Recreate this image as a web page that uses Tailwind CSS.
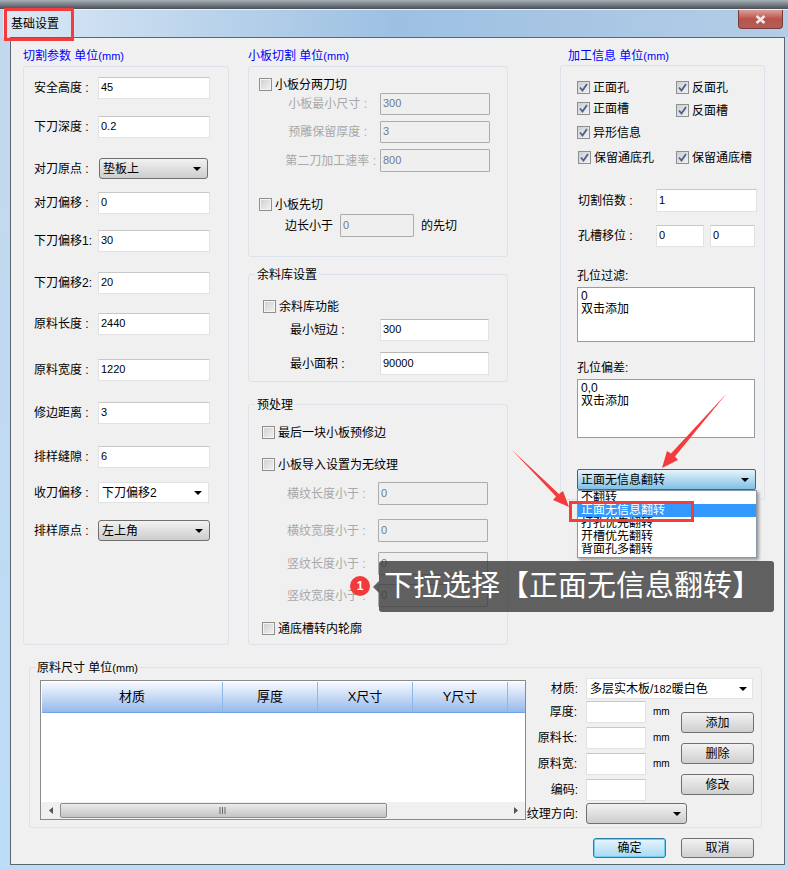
<!DOCTYPE html>
<html lang="zh-CN">
<head>
  <meta charset="UTF-8">
  <title>基础设置</title>
  <script src="https://cdn.jsdelivr.net/npm/@tailwindcss/browser@4"></script>
</head>
<body class="bg-[#b8c4d0]">
<div class="relative w-[788px] h-[870px] overflow-hidden text-[12px] leading-[14px] text-black [font-family:'Liberation_Sans','Noto_Sans_CJK_SC',sans-serif] bg-gradient-to-b from-[#c4d8ec] to-[#bcdcf8]">

  <!-- top strip behind the window -->
  <div class="h-[9px] bg-gradient-to-b from-[#a8b0b8] to-[#4a5058]"></div>

  <!-- title bar -->
  <div class="relative h-[28px] ml-[3px] bg-gradient-to-r from-[#dbe9f5] via-[#9dc0e2] to-[#b4cde6] border-t border-[#e8f2fa]">
    <span class="absolute left-[8px] top-[7px]">基础设置</span>
    <div class="absolute right-[5px] top-0 w-[45px] h-[19px] flex items-center justify-center rounded-b-[4px] border border-t-0 border-[#7a3a38] bg-gradient-to-b from-[#d9a09a] via-[#b9524a] to-[#b0605a]">
      <svg width="11" height="9" viewBox="0 0 11 9"><path d="M1.5 1 L9.5 8 M9.5 1 L1.5 8" stroke="#f0e8e8" stroke-width="2.6" fill="none"/></svg>
    </div>
  </div>

  <!-- window body -->
  <div class="ml-[10px] mr-[3px] h-[828px] bg-[#f0f0f0] border border-[#5c6670] pt-[11px] box-border">
    <div class="flex">

      <!-- left column -->
      <div class="ml-[12px] w-[206px]">
        <div class="h-[17px] text-[#0000ff]">切割参数 单位<span class="text-[11px]">(mm)</span></div>
        <div class="h-[579px] pl-[10px] pt-[10px] border border-[#dbe2ea] rounded-[3px] box-border">
          <div class="flex items-center h-[22px]"><span class="w-[64px]">安全高度 :</span><input value="45" class="w-[112px] h-[22px] pl-[2px] pb-[2px] text-[11px] bg-white border border-[#e2e2e2] border-t-[#c8c8c8]"></div>
          <div class="flex items-center h-[22px] mt-[17px]"><span class="w-[64px]">下刀深度 :</span><input value="0.2" class="w-[112px] h-[22px] pl-[2px] pb-[2px] text-[11px] bg-white border border-[#e2e2e2] border-t-[#c8c8c8]"></div>
          <div class="flex items-center h-[21px] mt-[20px]"><span class="w-[65px]">对刀原点 :</span><div class="flex items-center justify-between w-[109px] h-[21px] pl-[3px] pr-[6px] border border-[#707070] rounded-[3px] bg-gradient-to-b from-[#f2f2f2] to-[#cdcdcd]">垫板上<svg width="8" height="4" viewBox="0 0 8 4"><path d="M0 0H8L4 4Z" fill="#000"/></svg></div></div>
          <div class="flex items-center h-[22px] mt-[13px]"><span class="w-[64px]">对刀偏移 :</span><input value="0" class="w-[112px] h-[22px] pl-[2px] pb-[2px] text-[11px] bg-white border border-[#e2e2e2] border-t-[#c8c8c8]"></div>
          <div class="flex items-center h-[22px] mt-[16px]"><span class="w-[64px]">下刀偏移1:</span><input value="30" class="w-[112px] h-[22px] pl-[2px] pb-[2px] text-[11px] bg-white border border-[#e2e2e2] border-t-[#c8c8c8]"></div>
          <div class="flex items-center h-[22px] mt-[20px]"><span class="w-[64px]">下刀偏移2:</span><input value="20" class="w-[112px] h-[22px] pl-[2px] pb-[2px] text-[11px] bg-white border border-[#e2e2e2] border-t-[#c8c8c8]"></div>
          <div class="flex items-center h-[22px] mt-[19px]"><span class="w-[64px]">原料长度 :</span><input value="2440" class="w-[112px] h-[22px] pl-[2px] pb-[2px] text-[11px] bg-white border border-[#e2e2e2] border-t-[#c8c8c8]"></div>
          <div class="flex items-center h-[22px] mt-[24px]"><span class="w-[64px]">原料宽度 :</span><input value="1220" class="w-[112px] h-[22px] pl-[2px] pb-[2px] text-[11px] bg-white border border-[#e2e2e2] border-t-[#c8c8c8]"></div>
          <div class="flex items-center h-[22px] mt-[21px]"><span class="w-[64px]">修边距离 :</span><input value="3" class="w-[112px] h-[22px] pl-[2px] pb-[2px] text-[11px] bg-white border border-[#e2e2e2] border-t-[#c8c8c8]"></div>
          <div class="flex items-center h-[22px] mt-[22px]"><span class="w-[64px]">排样缝隙 :</span><input value="6" class="w-[112px] h-[22px] pl-[2px] pb-[2px] text-[11px] bg-white border border-[#e2e2e2] border-t-[#c8c8c8]"></div>
          <div class="flex items-center h-[21px] mt-[14px]"><span class="w-[64px]">收刀偏移 :</span><div class="flex items-center justify-between w-[111px] h-[21px] pl-[3px] pr-[6px] bg-white border border-[#e2e2e2]">下刀偏移2<svg width="8" height="4" viewBox="0 0 8 4"><path d="M0 0H8L4 4Z" fill="#000"/></svg></div></div>
          <div class="flex items-center h-[21px] mt-[17px]"><span class="w-[64px]">排样原点 :</span><div class="flex items-center justify-between w-[112px] h-[21px] pl-[3px] pr-[6px] border border-[#707070] rounded-[3px] bg-gradient-to-b from-[#f2f2f2] to-[#cdcdcd]">左上角<svg width="8" height="4" viewBox="0 0 8 4"><path d="M0 0H8L4 4Z" fill="#000"/></svg></div></div>
        </div>
      </div>

      <!-- middle column -->
      <div class="ml-[19px] w-[260px]">
        <div class="h-[17px] text-[#0000ff]">小板切割 单位<span class="text-[11px]">(mm)</span></div>

        <div class="h-[191px] pl-[10px] pt-[11px] border border-[#dbe2ea] rounded-[3px] box-border">
          <div class="flex items-center h-[13px] gap-[3px]"><div class="w-[13px] h-[13px] border border-[#8e8f8f] bg-gradient-to-br from-[#cfcfcf] to-[#f2f2f2] shadow-[inset_0_0_0_1px_#f4f4f4]"></div>小板分两刀切</div>
          <div class="flex items-center h-[22px] mt-[2px]"><span class="w-[121px] pr-[13px] text-right text-[#a8a8a8] whitespace-nowrap">小板最小尺寸 :</span><input disabled value="300" class="w-[110px] h-[22px] pl-[2px] pb-[2px] text-[11px] text-[#6d7c8c] bg-[#efefef] border border-[#acacac] rounded-[1px]"></div>
          <div class="flex items-center h-[22px] mt-[6px]"><span class="w-[121px] pr-[13px] text-right text-[#a8a8a8] whitespace-nowrap">预雕保留厚度 :</span><input disabled value="3" class="w-[110px] h-[22px] pl-[2px] pb-[2px] text-[11px] text-[#6d7c8c] bg-[#efefef] border border-[#acacac] rounded-[1px]"></div>
          <div class="flex items-center h-[23px] mt-[6px]"><span class="w-[121px] pr-[4px] text-right text-[#a8a8a8] whitespace-nowrap">第二刀加工速率 :</span><input disabled value="800" class="w-[110px] h-[23px] pl-[2px] pb-[2px] text-[11px] text-[#6d7c8c] bg-[#efefef] border border-[#acacac] rounded-[1px]"></div>
          <div class="flex items-center h-[13px] gap-[3px] mt-[26px]"><div class="w-[13px] h-[13px] border border-[#8e8f8f] bg-gradient-to-br from-[#cfcfcf] to-[#f2f2f2] shadow-[inset_0_0_0_1px_#f4f4f4]"></div>小板先切</div>
          <div class="flex items-center h-[23px] mt-[3px]"><span class="ml-[26px] w-[55px]">边长小于</span><input disabled value="0" class="w-[74px] h-[23px] pl-[2px] pb-[2px] text-[11px] text-[#6d7c8c] bg-[#efefef] border border-[#acacac] rounded-[1px]"><span class="ml-[7px]">的先切</span></div>
        </div>

        <div class="relative h-[108px] mt-[17px] pl-[14px] pt-[25px] border border-[#dbe2ea] rounded-[3px] box-border">
          <span class="absolute left-[6px] top-[-7px] px-[2px] bg-[#f0f0f0]">余料库设置</span>
          <div class="flex items-center h-[13px] gap-[3px]"><div class="w-[13px] h-[13px] border border-[#8e8f8f] bg-gradient-to-br from-[#cfcfcf] to-[#f2f2f2] shadow-[inset_0_0_0_1px_#f4f4f4]"></div>余料库功能</div>
          <div class="flex items-center h-[22px] mt-[6px]"><span class="ml-[27px] w-[90px]">最小短边 :</span><input value="300" class="w-[109px] h-[22px] pl-[2px] pb-[2px] text-[11px] bg-white border border-[#e2e2e2] border-t-[#b8b8b8]"></div>
          <div class="flex items-center h-[23px] mt-[11px]"><span class="ml-[27px] w-[90px]">最小面积 :</span><input value="90000" class="w-[109px] h-[23px] pl-[2px] pb-[2px] text-[11px] bg-white border border-[#e2e2e2] border-t-[#b8b8b8]"></div>
        </div>

        <div class="relative h-[241px] mt-[22px] pl-[13px] pt-[21px] border border-[#dbe2ea] rounded-[3px] box-border">
          <span class="absolute left-[6px] top-[-7px] px-[2px] bg-[#f0f0f0]">预处理</span>
          <div class="flex items-center h-[13px] gap-[3px]"><div class="w-[13px] h-[13px] border border-[#8e8f8f] bg-gradient-to-br from-[#cfcfcf] to-[#f2f2f2] shadow-[inset_0_0_0_1px_#f4f4f4]"></div>最后一块小板预修边</div>
          <div class="flex items-center h-[13px] gap-[3px] mt-[19px]"><div class="w-[13px] h-[13px] border border-[#8e8f8f] bg-gradient-to-br from-[#cfcfcf] to-[#f2f2f2] shadow-[inset_0_0_0_1px_#f4f4f4]"></div>小板导入设置为无纹理</div>
          <div class="flex items-center h-[23px] mt-[11px]"><span class="ml-[25px] w-[91px] text-[#a8a8a8] whitespace-nowrap">横纹长度小于 :</span><input disabled value="0" class="w-[110px] h-[23px] pl-[2px] pb-[2px] text-[11px] text-[#6d7c8c] bg-[#efefef] border border-[#acacac] rounded-[1px]"></div>
          <div class="flex items-center h-[23px] mt-[14px]"><span class="ml-[25px] w-[91px] text-[#a8a8a8] whitespace-nowrap">横纹宽度小于 :</span><input disabled value="0" class="w-[110px] h-[23px] pl-[2px] pb-[2px] text-[11px] text-[#6d7c8c] bg-[#efefef] border border-[#acacac] rounded-[1px]"></div>
          <div class="flex items-center h-[23px] mt-[10px]"><span class="ml-[25px] w-[91px] text-[#a8a8a8] whitespace-nowrap">竖纹长度小于 :</span><input disabled value="0" class="w-[110px] h-[23px] pl-[2px] pb-[2px] text-[11px] text-[#6d7c8c] bg-[#efefef] border border-[#acacac] rounded-[1px]"></div>
          <div class="flex items-center h-[23px] mt-[9px]"><span class="ml-[25px] w-[91px] text-[#a8a8a8] whitespace-nowrap">竖纹宽度小于 :</span><input disabled value="0" class="w-[110px] h-[23px] pl-[2px] pb-[2px] text-[11px] text-[#6d7c8c] bg-[#efefef] border border-[#acacac] rounded-[1px]"></div>
          <div class="flex items-center h-[13px] gap-[3px] mt-[15px]"><div class="w-[13px] h-[13px] border border-[#8e8f8f] bg-gradient-to-br from-[#cfcfcf] to-[#f2f2f2] shadow-[inset_0_0_0_1px_#f4f4f4]"></div>通底槽转内轮廓</div>
        </div>
      </div>

      <!-- right column -->
      <div class="ml-[52px] w-[205px]">
        <div class="h-[16px] ml-[8px] text-[#0000ff]">加工信息 单位<span class="text-[11px]">(mm)</span></div>
        <div class="relative h-[435px] pl-[16px] pt-[15px] border border-[#dbe2ea] rounded-[3px] box-border">
          <div class="flex h-[13px]">
            <div class="flex items-center w-[99px] gap-[3px]"><div class="flex items-center justify-center w-[13px] h-[13px] border border-[#8e8f8f] bg-gradient-to-br from-[#cfcfcf] to-[#f2f2f2]"><svg width="9" height="9" viewBox="0 0 9 9"><path d="M1 4.5 L3.5 7.5 L8 1" stroke="#4a5f94" stroke-width="1.8" fill="none"/></svg></div>正面孔</div>
            <div class="flex items-center gap-[3px]"><div class="flex items-center justify-center w-[13px] h-[13px] border border-[#8e8f8f] bg-gradient-to-br from-[#cfcfcf] to-[#f2f2f2]"><svg width="9" height="9" viewBox="0 0 9 9"><path d="M1 4.5 L3.5 7.5 L8 1" stroke="#4a5f94" stroke-width="1.8" fill="none"/></svg></div>反面孔</div>
          </div>
          <div class="flex items-start h-[15px] mt-[8px]">
            <div class="flex items-center w-[99px] h-[13px] gap-[3px]"><div class="flex items-center justify-center w-[13px] h-[13px] border border-[#8e8f8f] bg-gradient-to-br from-[#cfcfcf] to-[#f2f2f2]"><svg width="9" height="9" viewBox="0 0 9 9"><path d="M1 4.5 L3.5 7.5 L8 1" stroke="#4a5f94" stroke-width="1.8" fill="none"/></svg></div>正面槽</div>
            <div class="flex items-center h-[13px] mt-[2px] gap-[3px]"><div class="flex items-center justify-center w-[13px] h-[13px] border border-[#8e8f8f] bg-gradient-to-br from-[#cfcfcf] to-[#f2f2f2]"><svg width="9" height="9" viewBox="0 0 9 9"><path d="M1 4.5 L3.5 7.5 L8 1" stroke="#4a5f94" stroke-width="1.8" fill="none"/></svg></div>反面槽</div>
          </div>
          <div class="flex items-center h-[13px] mt-[9px] gap-[3px]"><div class="flex items-center justify-center w-[13px] h-[13px] border border-[#8e8f8f] bg-gradient-to-br from-[#cfcfcf] to-[#f2f2f2]"><svg width="9" height="9" viewBox="0 0 9 9"><path d="M1 4.5 L3.5 7.5 L8 1" stroke="#4a5f94" stroke-width="1.8" fill="none"/></svg></div>异形信息</div>
          <div class="flex h-[13px] mt-[12px]">
            <div class="flex items-center w-[98px] ml-[1px] gap-[3px]"><div class="flex items-center justify-center w-[13px] h-[13px] border border-[#8e8f8f] bg-gradient-to-br from-[#cfcfcf] to-[#f2f2f2]"><svg width="9" height="9" viewBox="0 0 9 9"><path d="M1 4.5 L3.5 7.5 L8 1" stroke="#4a5f94" stroke-width="1.8" fill="none"/></svg></div>保留通底孔</div>
            <div class="flex items-center gap-[3px]"><div class="flex items-center justify-center w-[13px] h-[13px] border border-[#8e8f8f] bg-gradient-to-br from-[#cfcfcf] to-[#f2f2f2]"><svg width="9" height="9" viewBox="0 0 9 9"><path d="M1 4.5 L3.5 7.5 L8 1" stroke="#4a5f94" stroke-width="1.8" fill="none"/></svg></div>保留通底槽</div>
          </div>
          <div class="flex items-center h-[23px] mt-[25px]"><span class="w-[78px] ml-[1px]">切割倍数 :</span><input value="1" class="w-[101px] h-[23px] pl-[2px] pb-[2px] text-[11px] bg-white border border-[#e2e2e2] border-t-[#c8c8c8]"></div>
          <div class="flex items-center h-[22px] mt-[13px]"><span class="w-[78px] ml-[1px]">孔槽移位 :</span><input value="0" class="w-[48px] h-[22px] pl-[2px] pb-[2px] text-[11px] bg-white border border-[#e2e2e2] border-t-[#c8c8c8]"><input value="0" class="w-[45px] ml-[6px] h-[22px] pl-[2px] pb-[2px] text-[11px] bg-white border border-[#e2e2e2] border-t-[#c8c8c8]"></div>
          <div class="h-[14px] mt-[22px]">孔位过滤:</div>
          <textarea class="block w-[178px] h-[55px] mt-[4px] pl-[3px] pt-[2px] leading-[13px] resize-none bg-white border border-[#9a9aa4]">0
双击添加</textarea>
          <div class="h-[14px] mt-[19px]">孔位偏差:</div>
          <textarea class="block w-[178px] h-[59px] mt-[4px] pl-[3px] pt-[2px] leading-[13px] resize-none bg-white border border-[#9a9aa4]">0,0
双击添加</textarea>
          <div class="flex items-center justify-between w-[179px] h-[21px] mt-[31px] pl-[3px] pr-[6px] border border-[#2b6a94] rounded-[2px] bg-gradient-to-b from-[#e6f4fc] to-[#7fc0e4]">正面无信息翻转<svg width="8" height="4" viewBox="0 0 8 4"><path d="M0 0H8L4 4Z" fill="#000"/></svg></div>
          <!-- open dropdown list -->
          <div class="absolute left-[16px] top-[424px] w-[180px] h-[68px] bg-white border border-[#8a97a8] shadow-[2px_2px_3px_#999] leading-[13px]">
            <div class="h-[13px] pl-[3px] overflow-hidden">不翻转</div>
            <div class="h-[13px] pl-[3px] overflow-hidden bg-[#3399ff] text-white">正面无信息翻转</div>
            <div class="h-[13px] pl-[3px] overflow-hidden">打孔优先翻转</div>
            <div class="h-[13px] pl-[3px] overflow-hidden">开槽优先翻转</div>
            <div class="h-[13px] pl-[3px] overflow-hidden">背面孔多翻转</div>
          </div>
        </div>
      </div>
    </div>

    <!-- material size group -->
    <div class="relative ml-[18px] mt-[22px] w-[733px] h-[161px] border border-[#dbe2ea] rounded-[3px] box-border">
      <span class="absolute left-[6px] top-[-7px] px-[1px] bg-[#f0f0f0]">原料尺寸 单位<span class="text-[11px]">(mm)</span></span>
      <div class="flex">
        <!-- table -->
        <div class="w-[486px] h-[140px] ml-[10px] mt-[12px] border border-[#8a8a8a] bg-white flex flex-col box-border">
          <div class="flex h-[31px] ml-[1px] mt-[1px] border-b border-[#6ea3e4] bg-gradient-to-b from-[#f8fafe] to-[#96b9ea] text-[13px] text-center leading-[30px]">
            <div class="w-[181px] border-r border-[#8db8ec]">材质</div>
            <div class="w-[95px] border-r border-[#8db8ec]">厚度</div>
            <div class="w-[95px] border-r border-[#8db8ec]">X尺寸</div>
            <div class="w-[95px] border-r border-[#8db8ec]">Y尺寸</div>
            <div class="flex-1"></div>
          </div>
          <div class="flex-1"></div>
          <div class="flex items-center h-[17px] bg-[#f0f0f0]">
            <div class="w-[19px] flex justify-center"><svg width="4" height="7" viewBox="0 0 4 7"><path d="M4 0V7L0 3.5Z" fill="#555"/></svg></div>
            <div class="relative w-[327px] h-[15px] border border-[#8e8e8e] rounded-[2px] bg-gradient-to-b from-[#ececec] to-[#c4c4c4]">
              <svg class="absolute left-[158px] top-[3px]" width="8" height="7" viewBox="0 0 8 7"><path d="M1 0V7M3.5 0V7M6 0V7" stroke="#666"/></svg>
            </div>
            <div class="flex-1"></div>
            <div class="w-[19px] flex justify-center"><svg width="4" height="7" viewBox="0 0 4 7"><path d="M0 0V7L4 3.5Z" fill="#555"/></svg></div>
          </div>
        </div>

        <!-- material form -->
        <div class="w-[156px] mt-[10px]">
          <div class="flex items-center h-[21px]"><span class="w-[60px] shrink-0 pr-[8px] text-right">材质:</span><div class="flex items-center justify-between w-[167px] shrink-0 h-[21px] pl-[3px] pr-[5px] bg-white border border-[#e2e2e2]"><span class="whitespace-nowrap">多层实木板/<span class="text-[11px]">182</span>暖白色</span><svg width="8" height="4" viewBox="0 0 8 4"><path d="M0 0H8L4 4Z" fill="#000"/></svg></div></div>
          <div class="flex items-center h-[22px] mt-[2px]"><span class="w-[60px] shrink-0 pr-[9px] text-right">厚度:</span><input class="w-[60px] h-[22px] bg-white border border-[#e2e2e2] border-t-[#c8c8c8]"><span class="ml-[7px] text-[10px]">mm</span></div>
          <div class="flex items-center h-[22px] mt-[4px]"><span class="w-[60px] shrink-0 pr-[9px] text-right">原料长:</span><input class="w-[60px] h-[22px] bg-white border border-[#e2e2e2] border-t-[#c8c8c8]"><span class="ml-[7px] text-[10px]">mm</span></div>
          <div class="flex items-center h-[22px] mt-[4px]"><span class="w-[60px] shrink-0 pr-[9px] text-right">原料宽:</span><input class="w-[60px] h-[22px] bg-white border border-[#e2e2e2] border-t-[#c8c8c8]"><span class="ml-[7px] text-[10px]">mm</span></div>
          <div class="flex items-center h-[22px] mt-[4px]"><span class="w-[60px] shrink-0 pr-[8px] text-right">编码:</span><input class="w-[60px] h-[22px] bg-white border border-[#e2e2e2] border-t-[#c8c8c8]"></div>
          <div class="flex items-center h-[21px] mt-[2px]"><span class="w-[60px] shrink-0 pr-[8px] text-right whitespace-nowrap">纹理方向:</span><div class="flex items-center justify-end w-[101px] shrink-0 h-[21px] pr-[5px] border border-[#707070] rounded-[3px] bg-gradient-to-b from-[#f2f2f2] to-[#cdcdcd]"><svg width="8" height="4" viewBox="0 0 8 4"><path d="M0 0H8L4 4Z" fill="#000"/></svg></div></div>
        </div>

        <!-- action buttons -->
        <div class="ml-[-1px] mt-[44px] flex flex-col gap-[10px]">
          <div class="w-[73px] h-[21px] flex items-center justify-center border border-[#707070] rounded-[3px] bg-gradient-to-b from-[#f2f2f2] to-[#cfcfcf]">添加</div>
          <div class="w-[73px] h-[21px] flex items-center justify-center border border-[#707070] rounded-[3px] bg-gradient-to-b from-[#f2f2f2] to-[#cfcfcf]">删除</div>
          <div class="w-[73px] h-[21px] flex items-center justify-center border border-[#707070] rounded-[3px] bg-gradient-to-b from-[#f2f2f2] to-[#cfcfcf]">修改</div>
        </div>
      </div>
    </div>

    <!-- dialog buttons -->
    <div class="flex ml-[582px] mt-[10px] gap-[15px]">
      <div class="w-[73px] h-[20px] flex items-center justify-center border border-[#2b7ea8] rounded-[3px] shadow-[inset_0_0_0_1px_#6fd0f4] bg-gradient-to-b from-[#e8f6fd] to-[#a8d8f2]">确定</div>
      <div class="w-[73px] h-[20px] flex items-center justify-center border border-[#707070] rounded-[3px] bg-gradient-to-b from-[#f2f2f2] to-[#cfcfcf]">取消</div>
    </div>
  </div>

  <!-- annotations drawn over the screenshot -->
  <div class="absolute left-[4px] top-[8px] w-[70px] h-[33px] border-[3px] border-[#f43c3c]"></div>
  <div class="absolute left-[569px] top-[501px] w-[125px] h-[21px] border-[3px] border-[#f43c3c]"></div>
  <svg class="absolute left-0 top-0" width="788" height="870" viewBox="0 0 788 870">
    <polygon points="727,393 675,456.5 678,460 662,468 667,451 671,453.5" fill="#f43c3c"/>
    <polygon points="512,450 559,494 563,491 569,507 553,500 556,496.5" fill="#f43c3c"/>
  </svg>

  <!-- tooltip -->
  <div class="absolute left-[379px] top-[561px] w-[395px] h-[51px] flex items-center pl-[5px] rounded-[3px] bg-[#3c3c3c]/80 text-white text-[29px] leading-none whitespace-nowrap">下拉选择【正面无信息翻转】</div>
  <div class="absolute left-[373px] top-[581px] w-0 h-0 border-y-[6px] border-y-transparent border-r-[6px] border-r-[#3c3c3c]/80"></div>
  <div class="absolute left-[350px] top-[576px] w-[20px] h-[20px] flex items-center justify-center rounded-full bg-[#f23a3a] text-white text-[12px] font-bold">1</div>
</div>
</body>
</html>
